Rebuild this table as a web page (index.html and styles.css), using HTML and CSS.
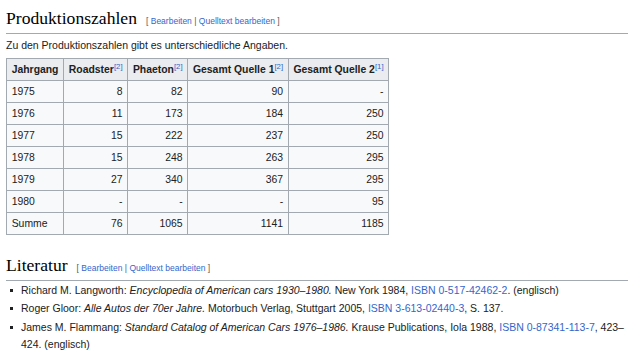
FILE: index.html
```html
<!DOCTYPE html>
<html lang="de">
<head>
<meta charset="utf-8">
<link rel="stylesheet" href="styles.css">
</head>
<body>
<main class="content">
  <h2 class="heading"><span class="headline">Produktionszahlen</span><span class="editsection"><span class="bracket">[</span> <a href="#">Bearbeiten</a> <span class="bracket">|</span> <a href="#">Quelltext bearbeiten</a> <span class="bracket">]</span></span></h2>
  <p class="para">Zu den Produktionszahlen gibt es unterschiedliche Angaben.</p>
  <table class="wikitable">
    <thead>
      <tr><th>Jahrgang</th><th>Roadster<sup><a href="#">[2]</a></sup></th><th>Phaeton<sup><a href="#">[2]</a></sup></th><th>Gesamt Quelle 1<sup><a href="#">[2]</a></sup></th><th>Gesamt Quelle 2<sup><a href="#">[1]</a></sup></th></tr>
    </thead>
    <tbody>
      <tr><td>1975</td><td>8</td><td>82</td><td>90</td><td>-</td></tr>
      <tr><td>1976</td><td>11</td><td>173</td><td>184</td><td>250</td></tr>
      <tr><td>1977</td><td>15</td><td>222</td><td>237</td><td>250</td></tr>
      <tr><td>1978</td><td>15</td><td>248</td><td>263</td><td>295</td></tr>
      <tr><td>1979</td><td>27</td><td>340</td><td>367</td><td>295</td></tr>
      <tr><td>1980</td><td>-</td><td>-</td><td>-</td><td>95</td></tr>
      <tr><td>Summe</td><td>76</td><td>1065</td><td>1141</td><td>1185</td></tr>
    </tbody>
  </table>
  <h2 class="heading heading-lit"><span class="headline">Literatur</span><span class="editsection"><span class="bracket">[</span> <a href="#">Bearbeiten</a> <span class="bracket">|</span> <a href="#">Quelltext bearbeiten</a> <span class="bracket">]</span></span></h2>
  <ul class="refs">
    <li>Richard M. Langworth: <i>Encyclopedia of American cars 1930–1980.</i> New York 1984, <a href="#">ISBN 0-517-42462-2</a>. (englisch)</li>
    <li>Roger Gloor: <i>Alle Autos der 70er Jahre.</i> Motorbuch Verlag, Stuttgart 2005, <a href="#">ISBN 3-613-02440-3</a>, S. 137.</li>
    <li>James M. Flammang: <i>Standard Catalog of American Cars 1976–1986.</i> Krause Publications, Iola 1988, <a href="#">ISBN 0-87341-113-7</a>, 423–<br><span>424. (englisch)</span></li>
  </ul>
</main>
</body>
</html>
```

FILE: styles.css
```css
html, body {
  margin: 0;
  padding: 0;
  background: #ffffff;
}
body {
  font-family: "Liberation Sans", Arial, sans-serif;
  font-size: 10.5px;
  color: #202122;
}
a {
  color: #3366cc;
  text-decoration: none;
}
.content {
  margin-left: 6px;
  width: 622px;
}
.heading {
  margin: 7px 0 0;
  padding: 0;
  font-weight: normal;
  line-height: 23px;
  border-bottom: 1px solid #a2a9b1;
  display: flex;
  align-items: baseline;
}
.headline {
  font-family: "Liberation Serif", "Times New Roman", serif;
  font-size: 17.6px;
  color: #000000;
}
.editsection {
  margin-left: 9px;
  font-family: "Liberation Sans", Arial, sans-serif;
  font-size: 8.5px;
  white-space: nowrap;
}
.bracket {
  color: #54595d;
}
.para {
  margin: 3px 0 4px;
  line-height: 16.8px;
}
.wikitable {
  border-collapse: collapse;
  background: #f8f9fa;
  color: #202122;
  border: 1px solid #a2a9b1;
  font-size: 10.4px;
}
.wikitable th,
.wikitable td {
  border: 1px solid #a2a9b1;
  padding: 3px 4.7px;
  line-height: 15px;
  text-align: right;
  white-space: nowrap;
}
.wikitable th {
  background: #eaecf0;
  font-weight: bold;
  text-align: center;
}
.wikitable td:first-child {
  text-align: left;
}
.wikitable sup {
  font-size: 7.8px;
  font-weight: normal;
  line-height: 1;
  vertical-align: 4px;
}
.heading-lit {
  margin-top: 19px;
}
.refs {
  list-style: none;
  margin: 1px 0 0;
  padding: 0 0 0 15px;
}
.refs li {
  position: relative;
  line-height: 16.8px;
  margin-bottom: 1.7px;
}
.refs li::before {
  content: "";
  position: absolute;
  left: -11px;
  top: 7px;
  width: 3px;
  height: 3px;
  background: #202122;
}
```
